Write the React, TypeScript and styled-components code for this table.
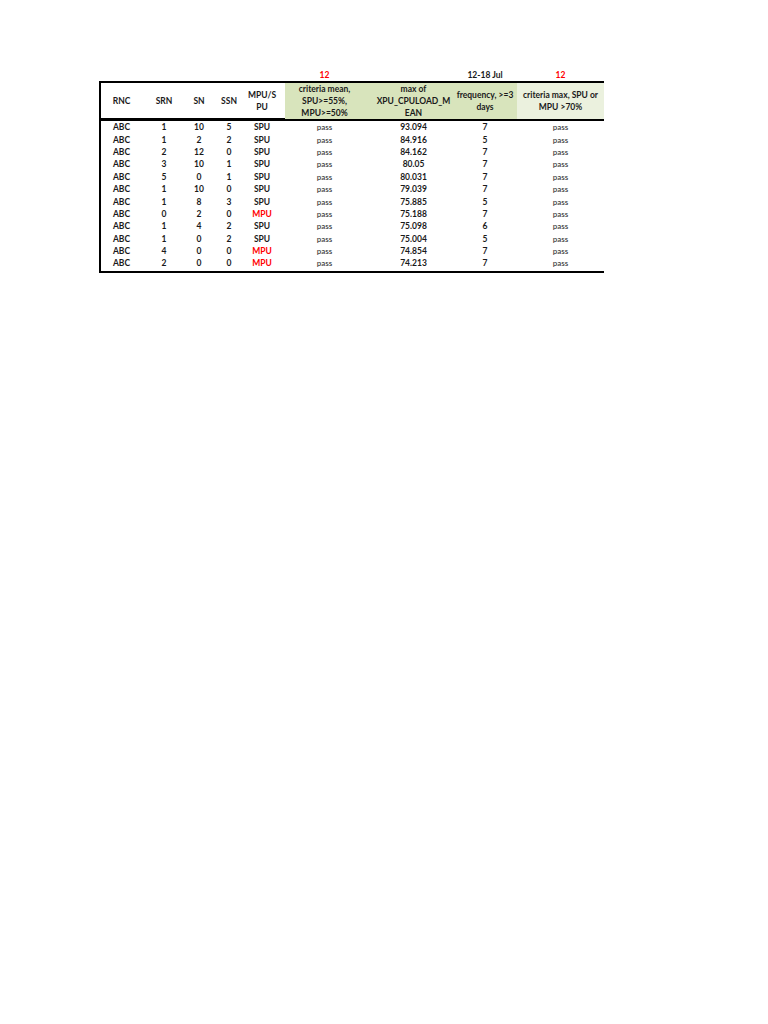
import React from 'react';
import styled, { createGlobalStyle } from 'styled-components';

type Column = { width: number; padLeft?: number; padRight?: number };

const columns: Column[] = [
  { width: 41 },
  { width: 44 },
  { width: 26 },
  { width: 34 },
  { width: 39, padRight: 7 },
  { width: 79 },
  { width: 89, padLeft: 10 },
  { width: 64 },
  { width: 87 },
];

const template = columns.map((c) => `${c.width}px`).join(' ');

type Row = {
  rnc: string;
  srn: number;
  sn: number;
  ssn: number;
  unit: 'SPU' | 'MPU';
  mean: string;
  max: string;
  freq: number;
  crit: string;
};

const rows: Row[] = [
  { rnc: 'ABC', srn: 1, sn: 10, ssn: 5, unit: 'SPU', mean: 'pass', max: '93.094', freq: 7, crit: 'pass' },
  { rnc: 'ABC', srn: 1, sn: 2, ssn: 2, unit: 'SPU', mean: 'pass', max: '84.916', freq: 5, crit: 'pass' },
  { rnc: 'ABC', srn: 2, sn: 12, ssn: 0, unit: 'SPU', mean: 'pass', max: '84.162', freq: 7, crit: 'pass' },
  { rnc: 'ABC', srn: 3, sn: 10, ssn: 1, unit: 'SPU', mean: 'pass', max: '80.05', freq: 7, crit: 'pass' },
  { rnc: 'ABC', srn: 5, sn: 0, ssn: 1, unit: 'SPU', mean: 'pass', max: '80.031', freq: 7, crit: 'pass' },
  { rnc: 'ABC', srn: 1, sn: 10, ssn: 0, unit: 'SPU', mean: 'pass', max: '79.039', freq: 7, crit: 'pass' },
  { rnc: 'ABC', srn: 1, sn: 8, ssn: 3, unit: 'SPU', mean: 'pass', max: '75.885', freq: 5, crit: 'pass' },
  { rnc: 'ABC', srn: 0, sn: 2, ssn: 0, unit: 'MPU', mean: 'pass', max: '75.188', freq: 7, crit: 'pass' },
  { rnc: 'ABC', srn: 1, sn: 4, ssn: 2, unit: 'SPU', mean: 'pass', max: '75.098', freq: 6, crit: 'pass' },
  { rnc: 'ABC', srn: 1, sn: 0, ssn: 2, unit: 'SPU', mean: 'pass', max: '75.004', freq: 5, crit: 'pass' },
  { rnc: 'ABC', srn: 4, sn: 0, ssn: 0, unit: 'MPU', mean: 'pass', max: '74.854', freq: 7, crit: 'pass' },
  { rnc: 'ABC', srn: 2, sn: 0, ssn: 0, unit: 'MPU', mean: 'pass', max: '74.213', freq: 7, crit: 'pass' },
];

const headers: { lines: string[]; fill?: 'green' | 'pale' }[] = [
  { lines: ['RNC'] },
  { lines: ['SRN'] },
  { lines: ['SN'] },
  { lines: ['SSN'] },
  { lines: ['MPU/S', 'PU'] },
  { lines: ['criteria mean,', 'SPU>=55%,', 'MPU>=50%'], fill: 'green' },
  { lines: ['max of', 'XPU_CPULOAD_M', 'EAN'], fill: 'green' },
  { lines: ['frequency, >=3', 'days'], fill: 'green' },
  { lines: ['criteria max, SPU or', 'MPU >70%'], fill: 'pale' },
];

const labels: { text: string; red?: boolean }[] = [
  { text: '' }, { text: '' }, { text: '' }, { text: '' }, { text: '' },
  { text: '12', red: true },
  { text: '' },
  { text: '12-18 Jul' },
  { text: '12', red: true },
];

function App() {
  return (
    <>
      <GlobalStyle />
      <Page>
        <Sheet>
          <LabelRow>
            {labels.map((l, i) => (
              <Cell key={i} $col={columns[i]} $red={l.red}>{l.text}</Cell>
            ))}
          </LabelRow>
          <Table>
            <HeaderRow>
              {headers.map((h, i) => (
                <HeaderCell key={i} $col={columns[i]} $fill={h.fill}>
                  {h.lines.map((line) => (
                    <span key={line}>{line}</span>
                  ))}
                </HeaderCell>
              ))}
            </HeaderRow>
            <Body>
              {rows.map((r, i) => (
                <DataRow key={i}>
                  <Cell $col={columns[0]}>{r.rnc}</Cell>
                  <Cell $col={columns[1]}>{r.srn}</Cell>
                  <Cell $col={columns[2]}>{r.sn}</Cell>
                  <Cell $col={columns[3]}>{r.ssn}</Cell>
                  <Cell $col={columns[4]} $red={r.unit === 'MPU'}>{r.unit}</Cell>
                  <Cell $col={columns[5]} $light>{r.mean}</Cell>
                  <Cell $col={columns[6]}>{r.max}</Cell>
                  <Cell $col={columns[7]}>{r.freq}</Cell>
                  <Cell $col={columns[8]} $light>{r.crit}</Cell>
                </DataRow>
              ))}
            </Body>
          </Table>
        </Sheet>
      </Page>
    </>
  );
}

const GlobalStyle = createGlobalStyle`
    html, body {
        margin: 0;
        padding: 0;
        background: #ffffff;
    }
    body {
        font-family: Lato, "Liberation Sans", sans-serif;
        color: #1a1a1a;
    }
`;

const Page = styled.div`
    width: 768px;
    height: 1024px;
    padding: 68px 0 0 99px;
    box-sizing: border-box;
`;

const Sheet = styled.div`
    display: flex;
    flex-direction: column;
    width: 505px;
`;

const LabelRow = styled.div`
    display: grid;
    grid-template-columns: ${template};
    height: 13px;
    padding-left: 2px;
    align-items: center;
`;

const Table = styled.div`
    display: flex;
    flex-direction: column;
    border-left: 2px solid #000;
    border-top: 2px solid #000;
    border-bottom: 2px solid #000;
`;

const HeaderRow = styled.div`
    display: grid;
    grid-template-columns: ${template};
    height: 35px;
    border-bottom: 3px solid #000;
`;

const HeaderCell = styled.div<{ $col: Column; $fill?: 'green' | 'pale' }>`
    display: flex;
    flex-direction: column;
    justify-content: center;
    align-items: center;
    padding-left: ${(p) => p.$col.padLeft ?? 0}px;
    padding-right: ${(p) => p.$col.padRight ?? 0}px;
    background: ${(p) => (p.$fill === 'green' ? '#d8e4bc' : p.$fill === 'pale' ? '#ebf1de' : 'transparent')};
    font-size: 8.5px;
    font-weight: 700;
    line-height: 12px;
    white-space: nowrap;
    color: #1a1a1a;
`;

const Body = styled.div`
    display: flex;
    flex-direction: column;
    padding-bottom: 1px;
`;

const DataRow = styled.div`
    display: grid;
    grid-template-columns: ${template};
    height: 12.4px;
    align-items: center;
`;

const Cell = styled.div<{ $col: Column; $red?: boolean; $light?: boolean }>`
    text-align: center;
    padding-left: ${(p) => p.$col.padLeft ?? 0}px;
    padding-right: ${(p) => p.$col.padRight ?? 0}px;
    font-size: ${(p) => (p.$light ? 8 : 8.5)}px;
    font-weight: ${(p) => (p.$light ? 600 : 700)};
    color: ${(p) => (p.$red ? '#ff0000' : p.$light ? '#444444' : '#1a1a1a')};
    line-height: 12px;
    white-space: nowrap;
`;

export default App;
